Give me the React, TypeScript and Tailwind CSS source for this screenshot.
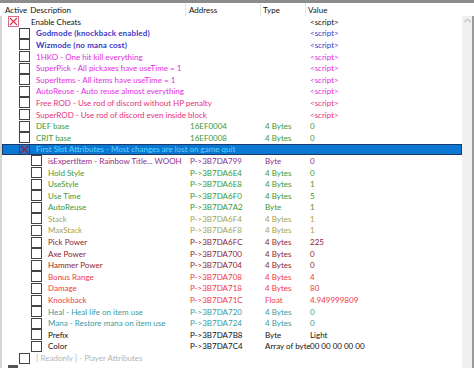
type Row = {
  level: 0 | 1 | 2;
  desc: string;
  addr?: string;
  type?: string;
  value?: string;
  color: string;
  checked?: boolean;
  selected?: boolean;
};

const blue = "text-[#3838c8] font-bold tracking-[0.15px]";
const magenta = "text-[#e22ee2]";
const pink = "text-[#e82f7c]";
const green = "text-[#3a983c]";
const purple = "text-[#8b2f8e]";
const olive = "text-[#a4a453]";
const maroon = "text-[#8e1f30]";
const red = "text-[#f0384a]";
const teal = "text-[#3c9aa0]";
const black = "text-[#111]";

const rows: Row[] = [
  { level: 0, desc: "Enable Cheats", value: "<script>", color: black, checked: true },
  { level: 1, desc: "Godmode (knockback enabled)", value: "<script>", color: blue },
  { level: 1, desc: "Wizmode (no mana cost)", value: "<script>", color: blue },
  { level: 1, desc: "1HKO - One hit kill everything", value: "<script>", color: magenta },
  { level: 1, desc: "SuperPick - All pickaxes have useTime = 1", value: "<script>", color: magenta },
  { level: 1, desc: "SuperItems - All items have useTime = 1", value: "<script>", color: magenta },
  { level: 1, desc: "AutoReuse - Auto reuse almost everything", value: "<script>", color: magenta },
  { level: 1, desc: "Free ROD - Use rod of discord without HP penalty", value: "<script>", color: pink },
  { level: 1, desc: "SuperROD - Use rod of discord even inside block", value: "<script>", color: pink },
  { level: 1, desc: "DEF base", addr: "16EF0004", type: "4 Bytes", value: "0", color: green },
  { level: 1, desc: "CRIT base", addr: "16EF0008", type: "4 Bytes", value: "0", color: green },
  { level: 1, desc: "First Slot Attributes - Most changes are lost on game quit", color: "text-[#5fd3ff]", checked: true, selected: true },
  { level: 2, desc: "isExpertItem - Rainbow Title... WOOH", addr: "P->3B7DA799", type: "Byte", value: "0", color: purple },
  { level: 2, desc: "Hold Style", addr: "P->3B7DA6E4", type: "4 Bytes", value: "0", color: green },
  { level: 2, desc: "UseStyle", addr: "P->3B7DA6E8", type: "4 Bytes", value: "1", color: green },
  { level: 2, desc: "Use Time", addr: "P->3B7DA6F0", type: "4 Bytes", value: "5", color: green },
  { level: 2, desc: "AutoReuse", addr: "P->3B7DA7A2", type: "Byte", value: "1", color: green },
  { level: 2, desc: "Stack", addr: "P->3B7DA6F4", type: "4 Bytes", value: "1", color: olive },
  { level: 2, desc: "MaxStack", addr: "P->3B7DA6F8", type: "4 Bytes", value: "1", color: olive },
  { level: 2, desc: "Pick Power", addr: "P->3B7DA6FC", type: "4 Bytes", value: "225", color: maroon },
  { level: 2, desc: "Axe Power", addr: "P->3B7DA700", type: "4 Bytes", value: "0", color: maroon },
  { level: 2, desc: "Hammer Power", addr: "P->3B7DA704", type: "4 Bytes", value: "0", color: maroon },
  { level: 2, desc: "Bonus Range", addr: "P->3B7DA708", type: "4 Bytes", value: "4", color: red },
  { level: 2, desc: "Damage", addr: "P->3B7DA718", type: "4 Bytes", value: "80", color: red },
  { level: 2, desc: "Knockback", addr: "P->3B7DA71C", type: "Float", value: "4.949999809", color: red },
  { level: 2, desc: "Heal - Heal life on item use", addr: "P->3B7DA720", type: "4 Bytes", value: "0", color: teal },
  { level: 2, desc: "Mana - Restore mana on item use", addr: "P->3B7DA724", type: "4 Bytes", value: "0", color: teal },
  { level: 2, desc: "Prefix", addr: "P->3B7DA7B8", type: "Byte", value: "Light", color: black },
  { level: 2, desc: "Color", addr: "P->3B7DA7C4", type: "Array of byte", value: "00 00 00 00 00", color: black },
  { level: 1, desc: "[ Readonly ] - Player Attributes", color: "text-[#b4b4b4]" },
];

const indent = { 0: "pl-[6px]", 1: "pl-[17px]", 2: "pl-[29px]" };
const gap = { 0: "mr-[12px]", 1: "mr-[6px]", 2: "mr-[6px]" };

function Box({ checked, root, selected }: { checked?: boolean; root?: boolean; selected?: boolean }) {
  return (
    <div
      className={`w-[11px] h-[11px] flex-none border ${
        root ? "border-[#d9708a] bg-white" : selected ? "border-[#3a3a6a] bg-[#2c6fb8]" : "border-[#444] bg-white"
      }`}
    >
      {checked && (
        <svg width="9" height="9" viewBox="0 0 9 9">
          <path
            d="M1 1L8 8M8 1L1 8"
            stroke={root ? "#e0304a" : "#8a1f4a"}
            strokeWidth="1.1"
          />
        </svg>
      )}
    </div>
  );
}

function TableRow({ r }: { r: Row }) {
  return (
    <div
      className={`flex items-center h-[11.6px] whitespace-nowrap ${r.color} ${
        r.selected ? "bg-[#0a78d2] outline outline-1 outline-[#1b3a6a] -outline-offset-1" : ""
      }`}
    >
      <div className={`w-[186px] flex-none flex items-center ${indent[r.level]}`}>
        <div className={gap[r.level]}>
          <Box checked={r.checked} root={r.level === 0} selected={r.selected} />
        </div>
        <span>{r.desc}</span>
      </div>
      <div className="w-[75px] flex-none pl-[2px] font-normal tracking-normal">{r.addr}</div>
      <div className="w-[45px] flex-none pl-[2px] font-normal tracking-normal">{r.type}</div>
      <div className="flex-1 pl-[2px] font-normal tracking-normal">{r.value}</div>
    </div>
  );
}

export default function App() {
  return (
    <div
      className="w-[474px] h-[368px] overflow-hidden bg-white text-[8px] leading-none flex flex-col"
      style={{ fontFamily: 'Lato, "Noto Sans", sans-serif' }}
    >
      <div className="h-[3px] bg-[#8c8c8c] flex-none" />
      <div className="h-[13px] flex-none flex items-center text-[#111] whitespace-nowrap">
        <div className="w-[186px] flex-none flex items-center pl-[5px] border-r border-[#e6e6e6] h-full">
          <span className="mr-[3px]">Active</span>
          <span>Description</span>
        </div>
        <div className="w-[75px] flex-none pl-[3px] border-r border-[#e6e6e6] h-full flex items-center">Address</div>
        <div className="w-[45px] flex-none pl-[2px] border-r border-[#e6e6e6] h-full flex items-center">Type</div>
        <div className="flex-1 pl-[2px] h-full flex items-center">Value</div>
      </div>
      <div className="flex flex-1 min-h-0">
        <div className="flex-1 min-w-0 border-l-2 border-[#d4d4d4] overflow-hidden">
          {rows.map((r, i) => (
            <TableRow key={i} r={r} />
          ))}
          <div className="flex items-center h-[11.6px] pl-[6px]">
            <div className="w-[10px] h-[10px] bg-[#555]" />
          </div>
        </div>
        <div className="w-[10px] flex-none bg-[#f0f0f0] flex flex-col items-center pt-[2px]">
          <svg width="7" height="5" viewBox="0 0 7 5">
            <path d="M0.5 4L3.5 1L6.5 4" fill="none" stroke="#a0a0a0" strokeWidth="1" />
          </svg>
        </div>
        <div className="w-[2px] flex-none bg-[#9a9a9a]" />
      </div>
    </div>
  );
}
